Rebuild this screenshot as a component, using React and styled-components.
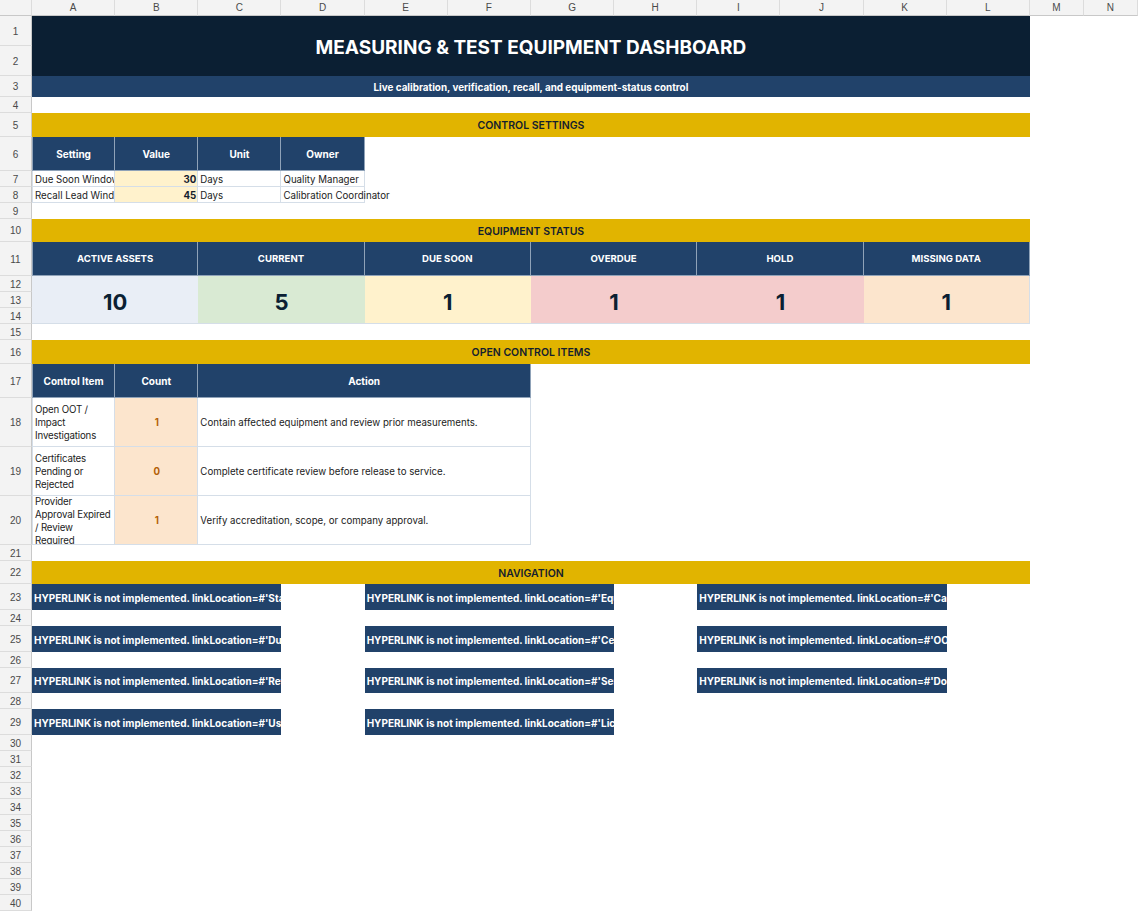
import React from "react";
import styled, { createGlobalStyle, css } from "styled-components";

const GlobalStyle = createGlobalStyle`
  html, body { margin: 0; padding: 0; background: #ffffff; }
  body { font-family: Inter, "Noto Sans", "Liberation Sans", sans-serif; }
  * { box-sizing: border-box; }
`;

const COLS = ["A", "B", "C", "D", "E", "F", "G", "H", "I", "J", "K", "L", "M", "N"];
const ROW_HEIGHTS = [
  30, 30, 21, 16, 24, 34, 16, 16, 16, 23, 34, 16, 16, 16, 16, 24, 34, 49, 49, 49,
  16, 23, 26, 16, 26, 16, 25, 16, 26, 16, 16, 16, 16, 16, 16, 16, 16, 16, 16, 16,
];

const Sheet = styled.div`
  display: grid;
  grid-template-columns: 32px repeat(12, 83.1667px) 54px 54px;
  grid-template-rows: 16px ${ROW_HEIGHTS.map((h) => `${h}px`).join(" ")};
  width: 1138px;
  height: 911px;
  overflow: hidden;
  background: #ffffff;
`;

const place = css`
  grid-column: ${(p) => p.$c} / span ${(p) => p.$cs || 1};
  grid-row: ${(p) => p.$r} / span ${(p) => p.$rs || 1};
  min-width: 0;
  min-height: 0;
`;

const HeaderBase = styled.div`
  ${place};
  background: #f3f3f3;
  color: #4a4a4a;
  font-family: "Liberation Sans", Arial, sans-serif;
  font-size: 10px;
  display: flex;
  align-items: center;
  justify-content: center;
  border-right: 1px solid #dcdcdc;
  border-bottom: 1px solid #dcdcdc;
`;

const Corner = styled(HeaderBase)`
  border-bottom: 1px solid #c8c8c8;
`;

const ColHead = styled(HeaderBase)`
  border-bottom: 1px solid #c8c8c8;
`;

const RowHead = styled(HeaderBase)`
  border-right: 1px solid #c8c8c8;
  padding-top: 1px;
`;

const Cell = styled.div`
  ${place};
  display: flex;
  align-items: center;
  overflow: hidden;
  white-space: nowrap;
`;

const Banner = styled(Cell)`
  background: #0b1f33;
  color: #ffffff;
  justify-content: center;
  font-weight: 700;
  font-size: 19px;
  padding-top: 2px;
`;

const Subtitle = styled(Cell)`
  background: #21426a;
  color: #ffffff;
  justify-content: center;
  font-weight: 700;
  font-size: 9.9px;
`;

const Section = styled(Cell)`
  background: #e1b400;
  color: #13202e;
  justify-content: center;
  font-weight: 600;
  font-size: 10.5px;
  padding-top: 1px;
`;

const HeadCell = styled(Cell)`
  background: #21426a;
  color: #ffffff;
  justify-content: center;
  font-weight: 700;
  font-size: 10px;
  border: 1px solid #8fa2b8;
  border-width: 0 1px 1px 0;
  ${(p) => p.$first && "border-left: 1px solid #8fa2b8;"}
`;

const DataCell = styled(Cell)`
  background: ${(p) => p.$bg || "#ffffff"};
  color: ${(p) => p.$color || "#222222"};
  font-size: 9.7px;
  font-weight: ${(p) => (p.$bold ? 700 : 400)};
  justify-content: ${(p) => p.$justify || "flex-start"};
  padding: 1px 1px 0 2px;
  border-right: 1px solid #d5dee8;
  border-bottom: 1px solid #d5dee8;
  ${(p) => p.$edge && "border-left: 1px solid #d5dee8;"}
  overflow: ${(p) => (p.$spill ? "visible" : "hidden")};
  white-space: ${(p) => (p.$wrap ? "normal" : "nowrap")};
  letter-spacing: ${(p) => (p.$wrap ? "-0.15px" : "0")};
  line-height: 13px;
  position: ${(p) => (p.$spill ? "relative" : "static")};
  z-index: ${(p) => (p.$spill ? 1 : "auto")};
`;

const KpiHead = styled(HeadCell)`
  font-size: 9.6px;
`;

const KpiValue = styled(Cell)`
  background: ${(p) => p.$bg};
  color: #0b1f33;
  justify-content: center;
  font-weight: 700;
  font-size: 22px;
  padding-top: 4px;
  border-bottom: 1px solid #d5dee8;
  ${(p) => p.$last && "border-right: 1px solid #d5dee8;"}
`;

const NavLink = styled(Cell)`
  background: #21426a;
  color: #ffffff;
  font-weight: 700;
  font-size: 10px;
  padding-left: 2px;
  padding-top: 1px;
`;

const kpis = [
  { label: "ACTIVE ASSETS", value: "10", bg: "#e9eef6" },
  { label: "CURRENT", value: "5", bg: "#d9ead3" },
  { label: "DUE SOON", value: "1", bg: "#fff2cc" },
  { label: "OVERDUE", value: "1", bg: "#f4cccc" },
  { label: "HOLD", value: "1", bg: "#f4cccc" },
  { label: "MISSING DATA", value: "1", bg: "#fce5cd" },
];

const settings = [
  { name: "Due Soon Window (Days)", value: "30", unit: "Days", owner: "Quality Manager" },
  { name: "Recall Lead Window (Days)", value: "45", unit: "Days", owner: "Calibration Coordinator" },
];

const controls = [
  { item: "Open OOT / Impact Investigations", count: "1", action: "Contain affected equipment and review prior measurements." },
  { item: "Certificates Pending or Rejected", count: "0", action: "Complete certificate review before release to service." },
  { item: "Provider Approval Expired / Review Required", count: "1", action: "Verify accreditation, scope, or company approval." },
];

const navCols = [
  ["Status Summary", "Due Soon", "Reference Lists", "User Guide"],
  ["Equipment Register", "Certificates", "Service Providers", "License"],
  ["Calibration Log", "OOT Investigations", "Document Control"],
];
const navStart = [2, 6, 10];
const navRows = [24, 26, 28, 30];

export default function App() {
  return (
    <>
      <GlobalStyle />
      <Sheet>
        <Corner $c={1} $r={1} />
        {COLS.map((l, i) => (
          <ColHead key={l} $c={i + 2} $r={1}>
            {l}
          </ColHead>
        ))}
        {ROW_HEIGHTS.map((_, i) => (
          <RowHead key={i} $c={1} $r={i + 2}>
            {i + 1}
          </RowHead>
        ))}

        <Banner $c={2} $cs={12} $r={2} $rs={2}>
          MEASURING &amp; TEST EQUIPMENT DASHBOARD
        </Banner>
        <Subtitle $c={2} $cs={12} $r={4}>
          Live calibration, verification, recall, and equipment-status control
        </Subtitle>

        <Section $c={2} $cs={12} $r={6}>CONTROL SETTINGS</Section>
        {["Setting", "Value", "Unit", "Owner"].map((h, i) => (
          <HeadCell key={h} $c={2 + i} $r={7} $first={i === 0}>
            {h}
          </HeadCell>
        ))}
        {settings.map((s, i) => (
          <React.Fragment key={s.name}>
            <DataCell $c={2} $r={8 + i} $edge>
              {s.name}
            </DataCell>
            <DataCell $c={3} $r={8 + i} $bg="#fff2cc" $bold $justify="flex-end" $color="#13202e">
              {s.value}
            </DataCell>
            <DataCell $c={4} $r={8 + i}>{s.unit}</DataCell>
            <DataCell $c={5} $r={8 + i} $spill>{s.owner}</DataCell>
          </React.Fragment>
        ))}

        <Section $c={2} $cs={12} $r={11}>EQUIPMENT STATUS</Section>
        {kpis.map((k, i) => (
          <React.Fragment key={k.label}>
            <KpiHead $c={2 + i * 2} $cs={2} $r={12} $first={i === 0}>
              {k.label}
            </KpiHead>
            <KpiValue $c={2 + i * 2} $cs={2} $r={13} $rs={3} $bg={k.bg} $last={i === 5}>
              {k.value}
            </KpiValue>
          </React.Fragment>
        ))}

        <Section $c={2} $cs={12} $r={17}>OPEN CONTROL ITEMS</Section>
        <HeadCell $c={2} $r={18} $first>Control Item</HeadCell>
        <HeadCell $c={3} $r={18}>Count</HeadCell>
        <HeadCell $c={4} $cs={4} $r={18}>Action</HeadCell>
        {controls.map((c, i) => (
          <React.Fragment key={c.item}>
            <DataCell $c={2} $r={19 + i} $wrap $edge>
              {c.item}
            </DataCell>
            <DataCell $c={3} $r={19 + i} $bg="#fce5cd" $bold $color="#b45f06" $justify="center">
              {c.count}
            </DataCell>
            <DataCell $c={4} $cs={4} $r={19 + i}>{c.action}</DataCell>
          </React.Fragment>
        ))}

        <Section $c={2} $cs={12} $r={23}>NAVIGATION</Section>
        {navCols.map((col, ci) =>
          col.map((target, ri) => (
            <NavLink key={target} $c={navStart[ci]} $cs={3} $r={navRows[ri]}>
              {`HYPERLINK is not implemented. linkLocation=#'${target}'!A1`}
            </NavLink>
          ))
        )}
      </Sheet>
    </>
  );
}
